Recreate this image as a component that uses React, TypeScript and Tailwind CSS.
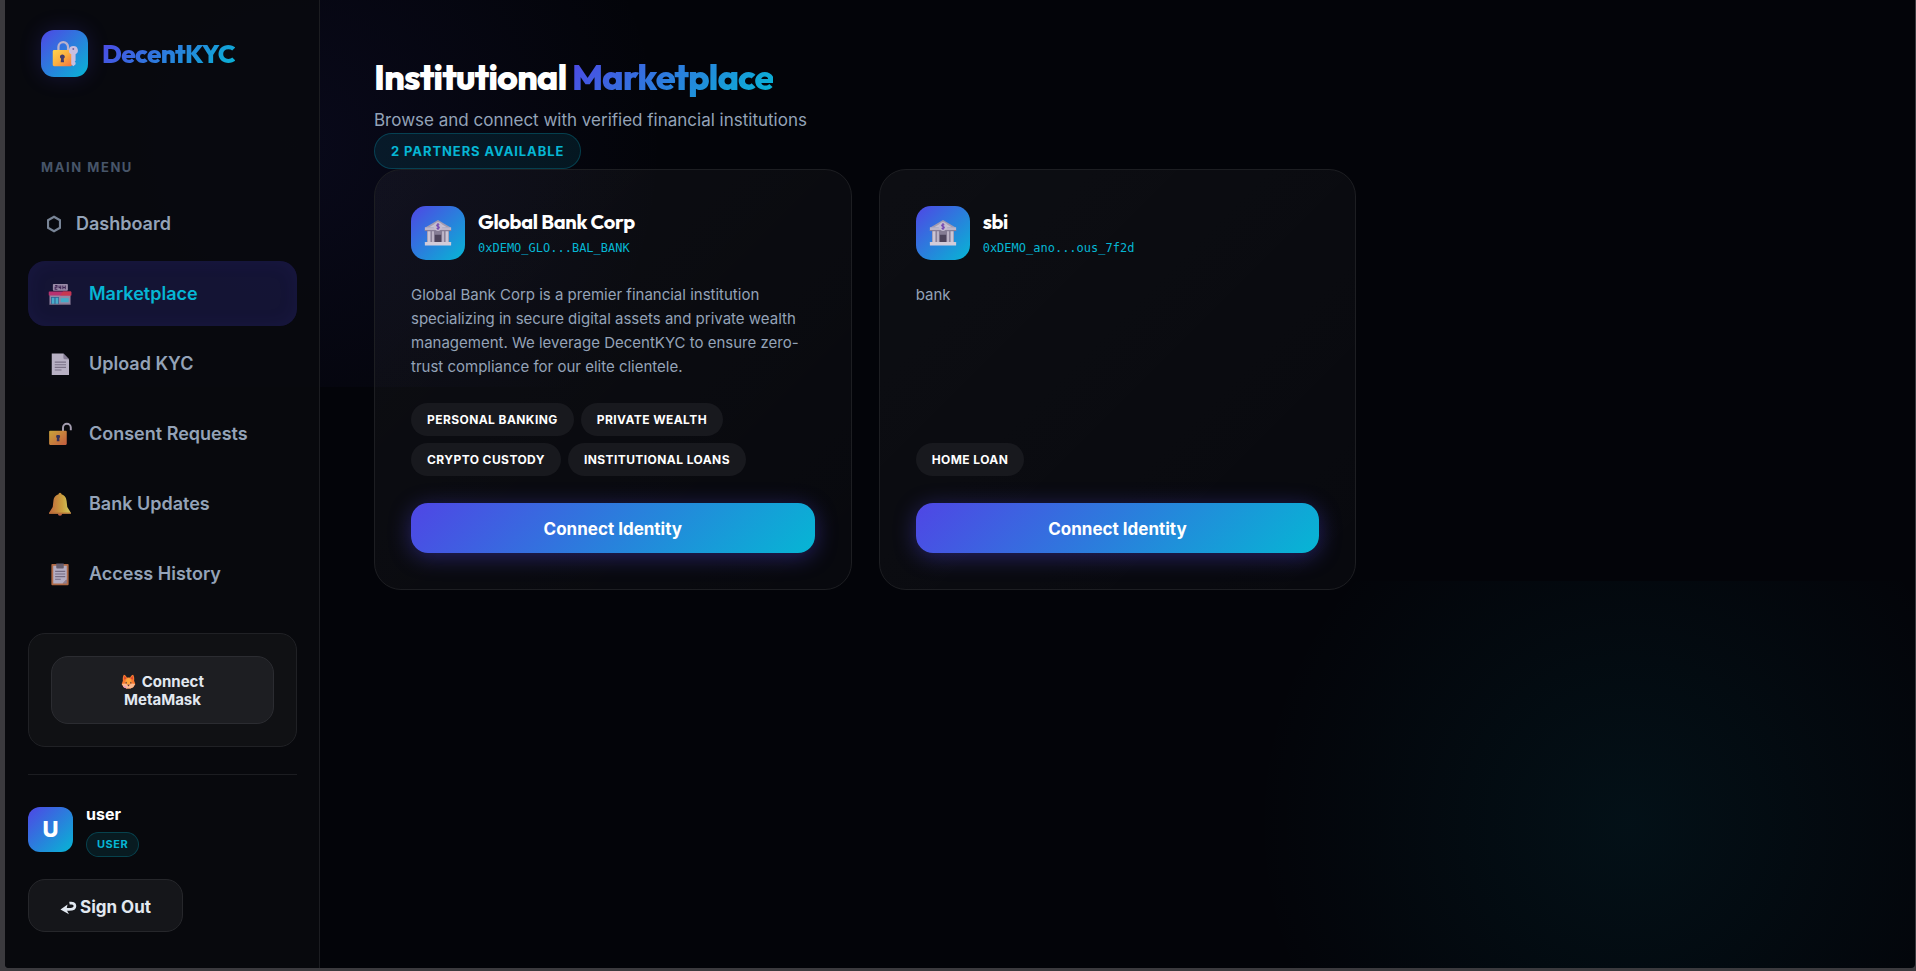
import React from 'react';

interface NavItem {
  label: string;
  icon: React.ReactNode;
  active?: boolean;
}

interface Institution {
  name: string;
  address: string;
  description: string;
  services: string[];
}

const LockKeyIcon = () => (
  <svg viewBox="0 0 32 32" className="size-7" aria-hidden="true">
    <defs>
      <linearGradient id="lockBody" x1="0" y1="0" x2="1" y2="1">
        <stop offset="0" stopColor="#ffd34d" />
        <stop offset="0.5" stopColor="#fbb040" />
        <stop offset="1" stopColor="#f4703f" />
      </linearGradient>
    </defs>
    <path d="M8.5 13V8a5.5 5.5 0 0 1 11 0v5" fill="none" stroke="#b9b2cd" strokeWidth="2.6" />
    <rect x="2" y="11.5" width="22" height="18.5" rx="1.6" fill="url(#lockBody)" />
    <path d="M13 16.5a2.7 2.7 0 0 0-1.5 5l-.4 3.8h3.8l-.4-3.8a2.7 2.7 0 0 0-1.5-5z" fill="#433b6b" />
    <path d="M25.5 7a5 5 0 0 0-2.4 9.4v11.4l2.4 2.2 2.6-2.2v-2l-1-1 1-1.2V16.4A5 5 0 0 0 25.5 7z" fill="#c9bfe0" />
    <circle cx="25.5" cy="10.2" r="1.1" fill="#7566a0" />
  </svg>
);

const BankIcon = () => (
  <svg viewBox="0 0 32 32" className="size-7" aria-hidden="true">
    <path d="M16 1 1 10h30z" fill="#a39bb0" />
    <path d="M16 3.5 6 9.5h20z" fill="#c8c2d1" />
    <rect x="1" y="9.5" width="30" height="4" fill="#bdb5c8" />
    <rect x="1" y="12.6" width="30" height="1.2" fill="#877d96" />
    <rect x="3.5" y="13.6" width="25" height="13" fill="#857c94" />
    <rect x="4" y="14" width="3.4" height="12.6" fill="#cbc5d4" />
    <rect x="9" y="14" width="2.4" height="12.6" fill="#bcb4c6" />
    <rect x="20.6" y="14" width="2.4" height="12.6" fill="#bcb4c6" />
    <rect x="24.6" y="14" width="3.4" height="12.6" fill="#cbc5d4" />
    <rect x="12.4" y="18" width="7.2" height="9" fill="#4d445b" />
    <rect x="1" y="26.4" width="30" height="4" rx="0.5" fill="#d2ccd9" />
    <circle cx="16" cy="8.6" r="5" fill="#c4bcd0" />
    <path
      d="M16 4.6v8M17.6 6.5c-3.6-.9-3.9 1.6-1.6 2 2.4.5 2 3-1.7 2.1"
      fill="none"
      stroke="#7448b0"
      strokeWidth="1.3"
    />
  </svg>
);

const HexagonIcon = () => (
  <svg viewBox="0 0 14 18" className="h-[18px] w-[14px]" aria-hidden="true">
    <path d="M7 1.8 13 5.3v7.4L7 16.2 1 12.7V5.3z" fill="none" stroke="currentColor" strokeWidth="2.2" />
  </svg>
);

const StoreIcon = () => (
  <svg viewBox="0 0 32 32" className="size-6" aria-hidden="true">
    <rect x="6.5" y="2.5" width="20" height="9" rx="1.2" fill="#bba9c6" />
    <path
      d="M9.5 4.8H12v2.3H9.5v2.6h3M14.7 4.8v2.7H17M17 4.8v4.9M19.8 4.8v4.9M19.8 7.2h3M23 4.8v4.9"
      fill="none"
      stroke="#4c2a5e"
      strokeWidth="1.4"
    />
    <rect x="2" y="17" width="28" height="13" fill="#b3a4c0" />
    <rect x="1" y="12.5" width="30" height="5.5" rx="0.8" fill="#e23a80" />
    <path d="M20 12.5h10.2a.8.8 0 0 1 .8.8V18H16z" fill="#f54058" />
    <rect x="4" y="20" width="10.5" height="10" fill="#3c6fa8" />
    <rect x="5" y="21" width="3.6" height="9" fill="#55d5f0" />
    <rect x="10" y="21" width="3.6" height="9" fill="#55d5f0" />
    <rect x="17" y="21.5" width="10.5" height="5.5" fill="#50d3ee" />
    <rect x="2" y="29" width="28" height="1.5" fill="#827389" />
  </svg>
);

const PageIcon = () => (
  <svg viewBox="0 0 32 32" className="size-6" aria-hidden="true">
    <path d="M5 2h15.5L28 9.5v21H5z" fill="#e4dcf2" />
    <path d="M20.5 2 28 9.500h-6A1.5 1.5 0 0 1 20.5 8z" fill="#a79bb8" />
    <path d="M9 13.5h15M9 17h15M9 20.5h15M9 24h9" stroke="#978ba5" strokeWidth="1.4" />
  </svg>
);

const UnlockIcon = () => (
  <svg viewBox="0 0 32 32" className="size-6" aria-hidden="true">
    <defs>
      <linearGradient id="unlockBody" x1="0" y1="0" x2="1" y2="1">
        <stop offset="0" stopColor="#fccb45" />
        <stop offset="1" stopColor="#f2714c" />
      </linearGradient>
    </defs>
    <path d="M20 13V7.500a5.2 5.2 0 0 1 10.4 0V11" fill="none" stroke="#cbc3d8" strokeWidth="2.6" />
    <rect x="1.500" y="11.5" width="23.5" height="19" rx="1.4" fill="url(#unlockBody)" />
    <path d="M13.5 16.5a2.8 2.8 0 0 0-1.6 5l-.2 4.2h3.6l-.2-4.2a2.8 2.8 0 0 0-1.6-5z" fill="#433b6b" />
  </svg>
);

const BellIcon = () => (
  <svg viewBox="0 0 32 32" className="size-6" aria-hidden="true">
    <defs>
      <linearGradient id="bellBody" x1="0" y1="0" x2="1" y2="0">
        <stop offset="0.1" stopColor="#f08a4a" />
        <stop offset="0.6" stopColor="#fcc64b" />
        <stop offset="0.85" stopColor="#ffe867" />
      </linearGradient>
    </defs>
    <circle cx="16" cy="29" r="2.8" fill="#ee7a5a" />
    <circle cx="16" cy="3" r="2" fill="#f7b34a" />
    <path
      d="M16 3c-5.6 0-8.3 4-8.8 9l-.9 8-4.8 7.5V29h29v-1.5L25.7 20l-.9-8C24.300 7 21.6 3 16 3z"
      fill="url(#bellBody)"
    />
    <path d="M1.5 27.5h29V29h-29z" fill="#dc8342" />
  </svg>
);

const ClipboardIcon = () => (
  <svg viewBox="0 0 32 32" className="size-6" aria-hidden="true">
    <rect x="4.5" y="2.5" width="23" height="28.5" rx="1.2" fill="#d98254" />
    <path d="M7 5h18v18l-5.5 5.5H7z" fill="#e0d7f0" />
    <path d="M25 23v5.5h-5.5z" fill="#a99db8" />
    <path d="M11 2h10v5.5a1 1 0 0 1-1 1h-8a1 1 0 0 1-1-1z" fill="#7e7487" />
    <path d="M9.5 12.5H23M9.5 16H23M9.5 19.5H23M9.5 23H17" stroke="#8f84a0" strokeWidth="1.4" />
  </svg>
);

const FoxIcon = () => (
  <svg viewBox="0 0 32 32" className="mr-[2px] inline size-[15px] align-[-2px]" aria-hidden="true">
    <path
      d="M6 1.5c3 .5 5.5 3.5 6.5 6h7C20.5 5 23 2 26 1.500c2.5 4 2.5 9 2 13l2.5 7-4.5 7-6 2.5h-8l-6-2.5-4.5-7 2.5-7c-.5-4-.5-9 2-13z"
      fill="#f8792f"
    />
    <path d="M7 4.500c2 1.500 3.300 3.200 4 5L6.500 12zM25 4.500c-2 1.500-3.300 3.200-4 5l4.500 2.500z" fill="#d9432f" />
    <path d="M16 8c4.500 2 7 6 7 11l-7 4-7-4c0-5 2.500-9 7-11z" fill="#ffa53c" />
    <path d="M1.500 21.500 9 20l7 3.500 7-3.500 7.500 1.500-4.500 7-6 2.500h-8L6 28.500z" fill="#fbb98f" />
    <path d="M4 26l6-1 3 6h-1l-6-2.500z" fill="#e79bc0" />
    <ellipse cx="11" cy="18.5" rx="1.3" ry="2" fill="#54323f" />
    <ellipse cx="21" cy="18.5" rx="1.3" ry="2" fill="#54323f" />
    <path d="M13.5 23h5L16 26.500z" fill="#54323f" />
  </svg>
);

const ReturnIcon = () => (
  <svg viewBox="0 0 18 14" className="h-[14px] w-[17px]" aria-hidden="true">
    <path d="M10 1.900c3.400-.6 5.800.4 5.800 2.900 0 2.600-3 3.700-6.300 3.700H5" fill="none" stroke="currentColor" strokeWidth="2.9" />
    <path d="M.5 8.500 8 3.200 6.800 8.500l2.700 5.200z" fill="currentColor" />
  </svg>
);

const navItems: NavItem[] = [
  { label: 'Dashboard', icon: <HexagonIcon /> },
  { label: 'Marketplace', icon: <StoreIcon />, active: true },
  { label: 'Upload KYC', icon: <PageIcon /> },
  { label: 'Consent Requests', icon: <UnlockIcon /> },
  { label: 'Bank Updates', icon: <BellIcon /> },
  { label: 'Access History', icon: <ClipboardIcon /> },
];

const institutions: Institution[] = [
  {
    name: 'Global Bank Corp',
    address: '0xDEMO_GLO...BAL_BANK',
    description:
      'Global Bank Corp is a premier financial institution specializing in secure digital assets and private wealth management. We leverage DecentKYC to ensure zero-trust compliance for our elite clientele.',
    services: ['Personal Banking', 'Private Wealth', 'Crypto Custody', 'Institutional Loans'],
  },
  {
    name: 'sbi',
    address: '0xDEMO_ano...ous_7f2d',
    description: 'bank',
    services: ['Home Loan'],
  },
];

const Sidebar = () => (
  <aside className="flex w-[315px] shrink-0 flex-col border-r border-[#1c1d21] bg-[#090a0e]/90 pt-[30px] pr-[22px] pb-9 pl-[23px]">
    <div className="flex items-center gap-[14px] pl-[13px]">
      <div className="flex size-[47px] items-center justify-center rounded-[13px] bg-linear-135/srgb from-[#4f46e5] to-[#06b6d4] shadow-[0_0_22px_rgba(79,70,229,0.2)]">
        <LockKeyIcon />
      </div>
      <span className="bg-linear-135/srgb from-[#4f46e5] to-[#06b6d4] bg-clip-text font-['Outfit','Lato',sans-serif] text-[26px] leading-9 font-extrabold tracking-tight text-transparent">
        DecentKYC
      </span>
    </div>

    <p className="mt-20 pl-[13px] text-[13px] leading-5 font-bold tracking-[0.12em] text-[#475569] uppercase">
      Main Menu
    </p>

    <nav className="mt-[14px] flex flex-col gap-[5px]">
      {navItems.map((item) => (
        <a
          key={item.label}
          href="#"
          className={`flex h-[65px] items-center gap-[15px] rounded-[17px] px-[19px] text-lg font-semibold ${
            item.active
              ? 'bg-[#4f46e5]/18 text-[#06b6d4] shadow-[inset_0_0_20px_rgba(79,70,229,0.08)]'
              : 'text-[#94a3b8]'
          }`}
        >
          <span className={item.label === 'Dashboard' ? 'opacity-80' : 'w-[27px] pl-px opacity-80'}>{item.icon}</span>
          {item.label}
        </a>
      ))}
    </nav>

    <div className="mt-auto">
      <div className="rounded-[17px] border border-[#202125] bg-[#101114] p-[22px]">
        <button className="w-full rounded-[17px] border border-[#2b2c31] bg-[#1d1e22] px-14 pt-4 pb-[14px] text-center text-[15px] leading-[18px] font-bold text-[#e2e8f0]">
          <FoxIcon /> Connect MetaMask
        </button>
      </div>

      <div className="mt-[27px] border-t border-[#1c1d21] pt-[27px]">
        <div className="flex items-center gap-[13px]">
          <div className="flex size-[45px] items-center justify-center rounded-xl bg-linear-135/srgb from-[#4f46e5] to-[#06b6d4] text-[22px] font-extrabold text-white">
            U
          </div>
          <div className="flex flex-col items-start gap-[6px]">
            <span className="text-base leading-6 font-bold text-white">user</span>
            <span className="rounded-full border border-[#06b6d4]/25 bg-[#06b6d4]/10 px-[10px] text-[11px] leading-[23px] font-bold tracking-wider text-[#06b6d4]">
              USER
            </span>
          </div>
        </div>
        <button className="mt-[22px] flex h-[53px] items-center gap-[3px] rounded-[17px] border border-[#26272b] bg-[#15161a] px-[31px] pt-1 text-[17px] font-bold text-[#e2e8f0]">
          <ReturnIcon />
          Sign Out
        </button>
      </div>
    </div>
  </aside>
);

const InstitutionCard: React.FC<{ institution: Institution }> = ({ institution }) => (
  <article className="flex flex-col rounded-[27px] border border-[#1d1e22] bg-linear-135/srgb from-white/4 to-white/2 p-9">
    <div className="flex items-center gap-[13px]">
      <div className="flex size-[54px] shrink-0 items-center justify-center rounded-[15px] bg-linear-135/srgb from-[#4f46e5] to-[#06b6d4]">
        <BankIcon />
      </div>
      <div>
        <h3 className="font-['Outfit','Lato',sans-serif] text-xl leading-7 font-bold tracking-[-0.015em] text-white">
          {institution.name}
        </h3>
        <p className="mt-[2px] font-['DejaVu_Sans_Mono',monospace] text-xs leading-5 text-[#06b6d4]">
          {institution.address}
        </p>
      </div>
    </div>

    <p className="mt-[23px] flex-1 text-[15px] leading-6 text-[#94a3b8]">{institution.description}</p>

    <div className="mt-6 flex flex-wrap gap-[7px]">
      {institution.services.map((service) => (
        <span
          key={service}
          className="rounded-full bg-[#18191e] px-4 text-xs leading-[33px] font-bold tracking-[0.035em] text-white uppercase"
        >
          {service}
        </span>
      ))}
    </div>

    <button className="mt-[27px] h-[50px] rounded-[17px] bg-linear-135/srgb from-[#4f46e5] to-[#06b6d4] pt-1 text-[17px] font-bold text-white shadow-[0_4px_22px_rgba(79,70,229,0.4)]">
      Connect Identity
    </button>
  </article>
);

export default function App() {
  return (
    <div className="flex min-h-screen bg-[#3b3a3e] pr-px pb-[3px] pl-[5px] font-['Inter','Noto_Sans',sans-serif]">
      <div className="relative isolate flex flex-1 overflow-hidden rounded-b-[4px] bg-[#030409]">
        {/* Ambient glows */}
        <div className="absolute -top-[10%] -left-[10%] -z-10 h-1/2 w-1/2 bg-[radial-gradient(circle,rgba(79,70,229,0.08)_0%,transparent_70%)]" />
        <div className="absolute -right-[10%] -bottom-[10%] -z-10 h-1/2 w-1/2 bg-[radial-gradient(circle,rgba(6,182,212,0.07)_0%,transparent_70%)]" />

        <Sidebar />

        <main className="flex-1 px-[54px] pt-[53px]">
          <h1 className="font-['Outfit','Lato',sans-serif] text-4xl leading-[48px] font-extrabold tracking-[-0.03em] text-white">
            Institutional{' '}
            <span className="bg-linear-135/srgb from-[#4f46e5] to-[#06b6d4] bg-clip-text text-transparent">
              Marketplace
            </span>
          </h1>
          <p className="mt-[6px] text-[17px] leading-[26px] text-[#94a3b8]">
            Browse and connect with verified financial institutions
          </p>
          <span className="block w-fit rounded-full border border-[#06b6d4]/25 bg-[#06b6d4]/10 px-4 text-[13px] leading-[34px] font-bold tracking-[0.07em] text-[#06b6d4] uppercase">
            {institutions.length} Partners Available
          </span>

          <div className="grid grid-cols-[repeat(auto-fill,minmax(400px,1fr))] gap-[27px]">
            {institutions.map((institution) => (
              <InstitutionCard key={institution.name} institution={institution} />
            ))}
          </div>
        </main>
      </div>
    </div>
  );
}
